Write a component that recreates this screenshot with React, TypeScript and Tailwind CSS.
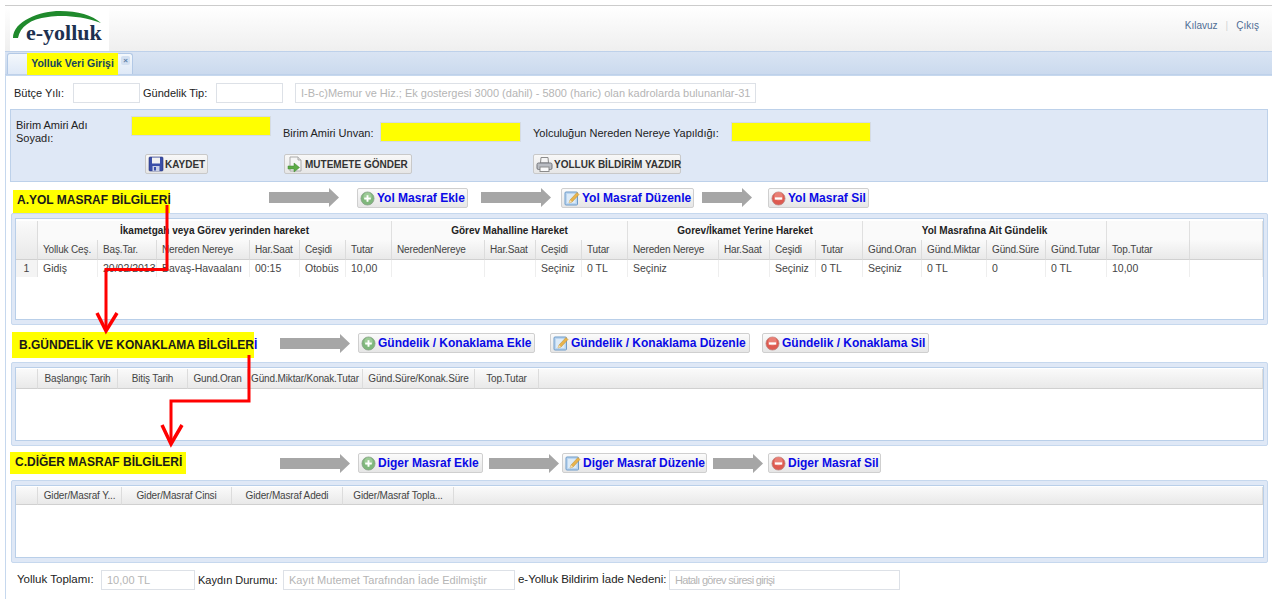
import { ReactNode } from "react";

const colsA = [
  "Yolluk Ceş.", "Baş.Tar.", "Nereden Nereye", "Har.Saat", "Ceşidi", "Tutar",
  "NeredenNereye", "Har.Saat", "Ceşidi", "Tutar",
  "Nereden Nereye", "Har.Saat", "Ceşidi", "Tutar",
  "Günd.Oran", "Günd.Miktar", "Günd.Süre", "Günd.Tutar", "Top.Tutar", "",
];

const rowA = [
  "Gidiş", "20/02/2013", "Bavaş-Havaalanı", "00:15", "Otobüs", "10,00",
  "", "", "Seçiniz", "0 TL",
  "Seçiniz", "", "Seçiniz", "0 TL",
  "Seçiniz", "0 TL", "0", "0 TL", "10,00", "",
];

const groupsA = [
  { label: "İkametgah veya Görev yerinden hareket", span: "col-span-6" },
  { label: "Görev Mahalline Hareket", span: "col-span-4" },
  { label: "Gorev/İkamet Yerine Hareket", span: "col-span-4" },
  { label: "Yol Masrafına Ait Gündelik", span: "col-span-4" },
  { label: "", span: "col-span-1" },
  { label: "", span: "col-span-1" },
];

const colsB = [
  "Başlangıç Tarih", "Bitiş Tarih", "Gund.Oran", "Günd.Miktar/Konak.Tutar",
  "Günd.Süre/Konak.Süre", "Top.Tutar", "",
];

const colsC = ["Gider/Masraf Y...", "Gider/Masraf Cinsi", "Gider/Masraf Adedi", "Gider/Masraf Topla...", ""];

const headCell = "border-r border-b border-[#dcdcdc] border-b-[#d0d0d0] bg-gradient-to-b from-[#fafafa] to-[#e9e9e9]";

function GrayArrow({ width }: { width: number }) {
  const head = width - 10;
  return (
    <svg width={width} height={19} viewBox={`0 0 ${width} 19`} className="shrink-0">
      <polygon points={`0,4 ${head},4 ${head},0 ${width},9.5 ${head},19 ${head},15 0,15`} fill="#a6a6a6" />
    </svg>
  );
}

function PlusIcon() {
  return (
    <svg width="15" height="15" viewBox="0 0 16 16" className="shrink-0">
      <circle cx="8" cy="8" r="7" fill="#7fb77c" stroke="#8a9f8a" strokeWidth="0.8" />
      <circle cx="8" cy="6" r="4.5" fill="#a9d3a2" opacity="0.7" />
      <rect x="4.5" y="7" width="7" height="2" fill="#fff" />
      <rect x="7" y="4.5" width="2" height="7" fill="#fff" />
    </svg>
  );
}

function MinusIcon() {
  return (
    <svg width="15" height="15" viewBox="0 0 16 16" className="shrink-0">
      <circle cx="8" cy="8" r="7" fill="#de5a50" stroke="#b98a86" strokeWidth="0.8" />
      <circle cx="8" cy="5.5" r="4.5" fill="#ee8f85" opacity="0.7" />
      <rect x="4" y="6.8" width="8" height="2.4" fill="#fff" />
    </svg>
  );
}

function EditIcon() {
  return (
    <svg width="16" height="16" viewBox="0 0 16 16" className="shrink-0">
      <rect x="1" y="2" width="12.5" height="13" rx="1" fill="#bcd6f0" stroke="#6f9cc9" />
      <rect x="3" y="4" width="8.5" height="9" fill="#dcebf8" />
      <path d="M5 13 L6 10 L13 2.5 L15 4.5 L8 12 Z" fill="#e9b44c" stroke="#b98a2c" strokeWidth="0.5" />
      <path d="M5 13 L6 10 L8 12 Z" fill="#f3e2bd" />
    </svg>
  );
}

function SaveIcon() {
  return (
    <svg width="16" height="16" viewBox="0 0 16 16" className="shrink-0">
      <rect x="1" y="1" width="14" height="14" rx="1" fill="#3b4fa8" stroke="#27347a" strokeWidth="0.6" />
      <rect x="4" y="1.5" width="8" height="6" fill="#f2f2f2" />
      <rect x="4.5" y="10" width="7" height="5" fill="#c9d0e6" />
      <rect x="6" y="11" width="2" height="3.5" fill="#3b4fa8" />
    </svg>
  );
}

function SendIcon() {
  return (
    <svg width="17" height="17" viewBox="0 0 17 17" className="shrink-0">
      <path d="M3 1 H11 L14 4 V15 H3 Z" fill="#f6f6f6" stroke="#a9a9a9" />
      <path d="M11 1 V4 H14" fill="#e2e2e2" stroke="#a9a9a9" />
      <path d="M1 10 H7 V7 L12.5 11.5 L7 16 V13 H1 Z" fill="#5cab45" stroke="#3e8530" strokeWidth="0.5" />
    </svg>
  );
}

function PrintIcon() {
  return (
    <svg width="17" height="17" viewBox="0 0 17 17" className="shrink-0">
      <path d="M4.5 7 L5 1.5 H12 L12.5 7 Z" fill="#f5f5f5" stroke="#8b8b8b" />
      <rect x="1" y="7" width="15" height="6.5" rx="1.5" fill="#b9bcc2" stroke="#74777d" />
      <rect x="4" y="11" width="9" height="4.5" fill="#fafafa" stroke="#8b8b8b" />
    </svg>
  );
}

function ActionButton({ icon, children, className }: { icon: ReactNode; children: ReactNode; className: string }) {
  return (
    <button
      type="button"
      className={`flex h-[20px] shrink-0 items-center gap-[2px] rounded-[2px] border border-[#cfcfcf] bg-gradient-to-b from-[#fbfbfb] to-[#e6e6e6] pl-[2px] text-[12px] font-bold text-[#0a0ae6] ${className}`}
    >
      {icon}
      <span className="whitespace-nowrap">{children}</span>
    </button>
  );
}

function FormButton({ icon, children, className }: { icon: ReactNode; children: ReactNode; className: string }) {
  return (
    <button
      type="button"
      className={`flex h-[20px] items-center gap-[1px] rounded-[2px] border border-[#c9c9c9] bg-gradient-to-b from-[#f8f8f8] to-[#e6e6e6] pl-[2px] text-[10px] font-bold text-[#333] ${className}`}
    >
      {icon}
      <span className="whitespace-nowrap">{children}</span>
    </button>
  );
}

function Field({ value, className }: { value?: string; className: string }) {
  return (
    <div className={`flex h-[20px] shrink-0 items-center overflow-hidden whitespace-nowrap border border-[#dde1e7] bg-white px-[5px] text-[11px] text-[#b5b5b5] ${className}`}>
      {value}
    </div>
  );
}

function YellowField({ className }: { className: string }) {
  return <div className={`h-[20px] border border-[#d5dbe3] bg-[#ffff00] ${className}`} />;
}

function Heading({ children, className }: { children: ReactNode; className: string }) {
  return (
    <span className={`flex items-center whitespace-nowrap bg-[#ffff00] text-[12px] font-bold text-[#1a1a1a] ${className}`}>
      {children}
    </span>
  );
}

function GridPanel({ height, inner, children }: { height: string; inner: string; children: ReactNode }) {
  return (
    <section className={`w-[1257px] rounded-[2px] border border-[#c6d8ee] bg-[#dfe8f6] px-[3px] pb-[4px] pt-[4px] ${height}`}>
      <div className={`h-full border border-[#b9cfe9] bg-white ${inner}`}>{children}</div>
    </section>
  );
}

function SimpleHeader({ cols, template, height }: { cols: string[]; template: string; height: string }) {
  return (
    <div className={`grid text-[10px] tracking-[-0.15px] text-[#444] ${height} ${template}`}>
      <div className={headCell} />
      {cols.map((c, i) => (
        <div key={i} className={`${headCell} flex items-center justify-center overflow-hidden whitespace-nowrap`}>
          {c}
        </div>
      ))}
    </div>
  );
}

export default function App() {
  return (
    <div className="relative h-[609px] w-[1272px] overflow-hidden bg-white pl-[5px] pt-[5px] font-['Liberation_Sans',Arial,sans-serif] text-[#222]">
      <header className="flex h-[46px] items-start justify-between border-t border-[#cccccc] bg-gradient-to-b from-white to-[#efefef]">
        <div className="relative ml-[5px] h-[45px] w-[99px] bg-white">
          <svg width="99" height="45" viewBox="0 0 99 45" className="absolute left-0 top-0">
            <path d="M3 32 C3 15 30 5 50 5 C68 5 82 9 91 17 C72 10 52 9 38 11 C20 13 10 21 8 32 Z" fill="#1f8a2c" />
          </svg>
          <span className="absolute left-[16px] top-[13px] font-['Liberation_Serif',serif] text-[22px] font-bold leading-[28px] text-[#1d3150]">
            e-yolluk
          </span>
        </div>
        <nav className="mr-[13px] mt-[12px] flex items-center gap-[8px] text-[10px] text-[#4f6d95]">
          <span>Kılavuz</span>
          <span className="text-[#d5d5d5]">|</span>
          <span>Çıkış</span>
        </nav>
      </header>

      <div className="flex h-[24px] items-end border-y border-[#bed1ea] bg-gradient-to-b from-[#d9e4f3] to-[#cbdaee] pl-[2px]">
        <div className="relative flex h-[21px] w-[126px] items-center rounded-t-[3px] border border-b-0 border-[#b3c9e6] bg-gradient-to-b from-[#f4f8fc] to-[#dfe9f7] pl-[19px]">
          <span className="flex h-[22px] w-[91px] items-center justify-center whitespace-nowrap bg-[#ffff00] text-[10.5px] font-bold text-[#15435f]">
            Yolluk Veri Girişi
          </span>
          <span className="mb-[7px] ml-[3px] flex h-[9px] w-[9px] items-center justify-center rounded-[2px] bg-[#d3e0f1] text-[8px] font-bold leading-none text-[#5f7fa8]">
            ×
          </span>
        </div>
      </div>

      <main className="h-[524px] border-l border-t border-[#c6d8ee] pl-[5px]">
        <div className="mt-[7px] flex items-center text-[11px]">
          <span className="ml-[3px] w-[59px]">Bütçe Yılı:</span>
          <Field className="w-[67px]" />
          <span className="ml-[3px] w-[73px]">Gündelik Tip:</span>
          <Field className="w-[67px]" />
          <Field
            className="ml-[12px] w-[461px]"
            value="I-B-c)Memur ve Hiz.; Ek gostergesi 3000 (dahil) - 5800 (haric) olan kadrolarda bulunanlar-31"
          />
        </div>

        <section className="-ml-[1px] mt-[6px] h-[73px] w-[1258px] border border-[#bdd1ea] bg-[#dfe8f6] pl-[5px] text-[11px]">
          <div className="grid h-[44px] grid-cols-[115px_152px_97px_153px_198px_140px] items-start">
            <label className="mt-[9px] leading-[13px]">
              Birim Amiri Adı
              <br />
              Soyadı:
            </label>
            <YellowField className="mt-[6px] w-[140px]" />
            <label className="mt-[15px] whitespace-nowrap">Birim Amiri Unvan:</label>
            <YellowField className="mt-[12px] w-[141px]" />
            <label className="mt-[15px] whitespace-nowrap">Yolculuğun Nereden Nereye Yapıldığı:</label>
            <YellowField className="mt-[12px] w-[140px]" />
          </div>
          <div className="grid grid-cols-[115px_152px_250px_198px]">
            <div />
            <FormButton icon={<SaveIcon />} className="ml-[14px] w-[63px]">KAYDET</FormButton>
            <FormButton icon={<SendIcon />} className="ml-[1px] w-[128px]">MUTEMETE GÖNDER</FormButton>
            <FormButton icon={<PrintIcon />} className="w-[148px]">YOLLUK BİLDİRİM YAZDIR</FormButton>
          </div>
        </section>

        <div className="mt-[6px] flex h-[20px] items-start">
          <div className="w-[258px] shrink-0">
            <Heading className="ml-[2px] mt-[2px] h-[23px] w-[157px] pb-[4px] pl-[4px]">A.YOL MASRAF BİLGİLERİ</Heading>
          </div>
          <GrayArrow width={70} />
          <ActionButton icon={<PlusIcon />} className="ml-[18px] w-[111px]">Yol Masraf Ekle</ActionButton>
          <div className="ml-[13px] shrink-0"><GrayArrow width={70} /></div>
          <ActionButton icon={<EditIcon />} className="ml-[10px] w-[133px]">Yol Masraf Düzenle</ActionButton>
          <div className="ml-[8px] shrink-0"><GrayArrow width={50} /></div>
          <ActionButton icon={<MinusIcon />} className="ml-[16px] w-[101px]">Yol Masraf Sil</ActionButton>
        </div>

        <div className="mt-[5px]">
          <GridPanel height="h-[112px]" inner="pt-[2px]">
            <div className="grid grid-cols-[22px_60px_59px_93px_50px_46px_46px_93px_51px_46px_46px_91px_51px_46px_47px_59px_65px_59px_61px_83px_1fr] text-[10.5px] text-[#444]">
              <div className={`${headCell} row-span-2`} />
              {groupsA.map((g, i) => (
                <div
                  key={i}
                  className={`${g.span} flex h-[19px] items-center justify-center whitespace-nowrap border-r border-[#e0e0e0] bg-[#fafafa] text-[10px] font-bold text-[#222]`}
                >
                  {g.label}
                </div>
              ))}
              {colsA.map((c, i) => (
                <div key={i} className={`${headCell} flex h-[20px] items-center overflow-hidden whitespace-nowrap pl-[5px] text-[10px] tracking-[-0.15px]`}>
                  {c}
                </div>
              ))}
              <div className="flex h-[17px] items-center justify-center border-r border-[#e4e4e4] bg-[#f4f4f4]">1</div>
              {rowA.map((c, i) => (
                <div key={i} className="flex h-[17px] items-center overflow-hidden whitespace-nowrap border-r border-[#eeeeee] pl-[5px]">
                  {c}
                </div>
              ))}
            </div>
          </GridPanel>
        </div>

        <div className="mt-[8px] flex h-[20px] items-start">
          <div className="w-[269px] shrink-0">
            <Heading className="-mt-[1px] ml-[1px] h-[26px] w-[242px] pl-[7px]">
              B.GÜNDELİK VE KONAKLAMA BİLGİLER<span className="text-[#0a0ae6]">İ</span>
            </Heading>
          </div>
          <div className="mt-[1px] shrink-0"><GrayArrow width={70} /></div>
          <ActionButton icon={<PlusIcon />} className="ml-[8px] w-[177px]">Gündelik / Konaklama Ekle</ActionButton>
          <ActionButton icon={<EditIcon />} className="ml-[15px] w-[200px]">Gündelik / Konaklama Düzenle</ActionButton>
          <ActionButton icon={<MinusIcon />} className="ml-[12px] w-[167px]">Gündelik / Konaklama Sil</ActionButton>
        </div>

        <div className="mt-[9px]">
          <GridPanel height="h-[84px]" inner="pt-[1px]">
            <SimpleHeader
              cols={colsB}
              height="h-[20px]"
              template="grid-cols-[22px_80px_70px_60px_115px_112px_64px_1fr]"
            />
          </GridPanel>
        </div>

        <div className="mt-[7px] flex h-[20px] items-start">
          <div className="w-[269px] shrink-0">
            <Heading className="-ml-[1px] -mt-[1px] h-[22px] w-[176px] pb-[2px] pl-[5px]">C.DİĞER MASRAF BİLGİLERİ</Heading>
          </div>
          <div className="mt-[1px] shrink-0"><GrayArrow width={70} /></div>
          <ActionButton icon={<PlusIcon />} className="ml-[8px] w-[125px]">Diger Masraf Ekle</ActionButton>
          <div className="ml-[6px] mt-[1px] shrink-0"><GrayArrow width={70} /></div>
          <ActionButton icon={<EditIcon />} className="ml-[3px] w-[145px]">Diger Masraf Düzenle</ActionButton>
          <div className="ml-[6px] mt-[1px] shrink-0"><GrayArrow width={50} /></div>
          <ActionButton icon={<MinusIcon />} className="ml-[5px] w-[113px]">Diger Masraf Sil</ActionButton>
        </div>

        <div className="mt-[7px]">
          <GridPanel height="h-[83px]" inner="pt-[1px]">
            <SimpleHeader
              cols={colsC}
              height="h-[18px]"
              template="grid-cols-[22px_84px_110px_111px_111px_1fr]"
            />
          </GridPanel>
        </div>

        <div className="mt-[7px] flex items-center text-[11px]">
          <span className="ml-[6px] w-[84px] whitespace-nowrap text-[11.5px]">Yolluk Toplamı:</span>
          <Field className="w-[94px]" value="10,00 TL" />
          <span className="ml-[3px] w-[85px] whitespace-nowrap">Kaydın Durumu:</span>
          <Field className="w-[232px]" value="Kayıt Mutemet Tarafından İade Edilmiştir" />
          <span className="ml-[3px] w-[151px] whitespace-nowrap text-[11.5px] tracking-[-0.05px]">e-Yolluk Bildirim İade Nedeni:</span>
          <Field className="w-[231px] tracking-[-0.7px]" value="Hatalı görev süresi girişi" />
        </div>
      </main>

      <svg width="1272" height="609" viewBox="0 0 1272 609" className="pointer-events-none absolute left-0 top-0" fill="none" stroke="#ff0000" strokeWidth="3">
        <path d="M167 205 V269.5 H106 V330" />
        <path d="M97 313 L106 331 L117 313" strokeWidth="3.5" />
        <path d="M249 355 V401 H171 V443" />
        <path d="M162 425 L171 444 L182 425" strokeWidth="3.5" />
      </svg>
    </div>
  );
}
